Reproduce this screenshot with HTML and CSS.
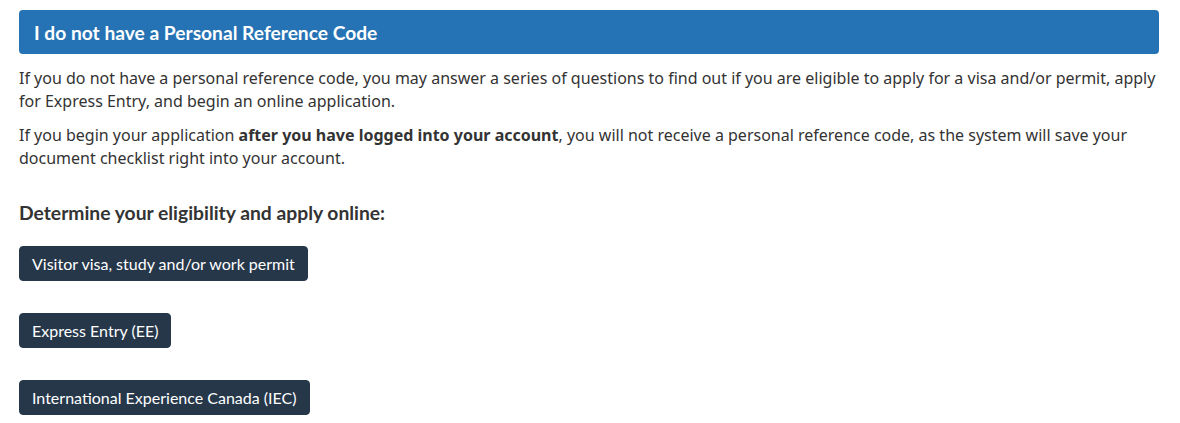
FILE: index.html
```html
<!DOCTYPE html>
<html lang="en">
<head>
<meta charset="utf-8">
<link rel="stylesheet" href="styles.css">
</head>
<body>
<main class="page">
  <h2 class="panel-title">I do not have a Personal Reference Code</h2>
  <p class="text">If you do not have a personal reference code, you may answer a series of questions to find out if you are eligible to apply for a visa and/or permit, apply for Express Entry, and begin an online application.</p>
  <p class="text">If you begin your application <strong>after you have logged into your account</strong>, you will not receive a personal reference code, as the system will save your document checklist right into your account.</p>
  <h3 class="subhead">Determine your eligibility and apply online:</h3>
  <div class="actions">
    <a class="btn">Visitor visa, study and/or work permit</a>
    <a class="btn">Express Entry (EE)</a>
    <a class="btn">International Experience Canada (IEC)</a>
  </div>
</main>
</body>
</html>
```
FILE: styles.css
```css
html, body {
  margin: 0;
  padding: 0;
  background: #ffffff;
}
.page {
  width: 1140px;
  margin: 0 0 0 19px;
  padding-top: 10px;
  font-family: "Noto Sans", "Open Sans", sans-serif;
  color: #333333;
}
.panel-title {
  margin: 0;
  height: 44px;
  box-sizing: border-box;
  padding: 0 15px;
  display: flex;
  align-items: center;
  background: #2572b4;
  color: #ffffff;
  border-radius: 4px;
  font-family: Lato, "Liberation Sans", sans-serif;
  font-weight: 700;
  font-size: 19.2px;
}
.text {
  margin: 13px 0 0;
  font-size: 16px;
  line-height: 23px;
}
.text + .text {
  margin-top: 11px;
}
.text strong {
  font-weight: 700;
}
.subhead {
  margin: 31px 0 0;
  font-family: Lato, "Liberation Sans", sans-serif;
  font-weight: 700;
  font-size: 19.3px;
  line-height: 24px;
  color: #333333;
}
.actions {
  margin-top: 21px;
  display: flex;
  flex-direction: column;
  align-items: flex-start;
  gap: 32px;
}
.btn {
  display: inline-block;
  box-sizing: border-box;
  height: 35px;
  padding: 5px 12px;
  border: 1px solid #26374a;
  border-radius: 4px;
  background: #26374a;
  color: #ffffff;
  font-family: Lato, "Liberation Sans", sans-serif;
  font-size: 16px;
  line-height: 23px;
}
```
